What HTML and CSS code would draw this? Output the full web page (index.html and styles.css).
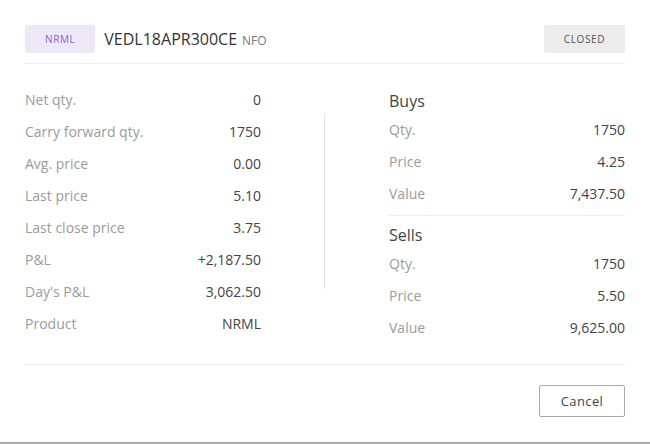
FILE: index.html
```html
<!DOCTYPE html>
<html lang="en">
<head>
  <meta charset="UTF-8">
  <title>Position</title>
  <link rel="stylesheet" href="styles.css">
</head>
<body>

  <div class="modal">
    <div class="modal-header">
      <span class="tag tag-product">NRML</span>
      <span class="symbol">VEDL18APR300CE</span>
      <span class="exchange">NFO</span>
      <span class="tag tag-status">CLOSED</span>
    </div>

    <div class="modal-body">
      <div class="col">
        <div class="row"><span class="label">Net qty.</span><span class="value">0</span></div>
        <div class="row"><span class="label">Carry forward qty.</span><span class="value">1750</span></div>
        <div class="row"><span class="label">Avg. price</span><span class="value">0.00</span></div>
        <div class="row"><span class="label">Last price</span><span class="value">5.10</span></div>
        <div class="row"><span class="label">Last close price</span><span class="value">3.75</span></div>
        <div class="row"><span class="label">P&amp;L</span><span class="value">+2,187.50</span></div>
        <div class="row"><span class="label">Day's P&amp;L</span><span class="value">3,062.50</span></div>
        <div class="row"><span class="label">Product</span><span class="value">NRML</span></div>
      </div>

      <div class="divider"></div>

      <div class="col">
        <div class="side">
          <h4>Buys</h4>
          <div class="row"><span class="label">Qty.</span><span class="value">1750</span></div>
          <div class="row"><span class="label">Price</span><span class="value">4.25</span></div>
          <div class="row"><span class="label">Value</span><span class="value">7,437.50</span></div>
        </div>
        <div class="side">
          <h4>Sells</h4>
          <div class="row"><span class="label">Qty.</span><span class="value">1750</span></div>
          <div class="row"><span class="label">Price</span><span class="value">5.50</span></div>
          <div class="row"><span class="label">Value</span><span class="value">9,625.00</span></div>
        </div>
      </div>
    </div>

    <div class="modal-footer">
      <button class="btn">Cancel</button>
    </div>
  </div>

</body>
</html>
```

FILE: styles.css
```css
body {
  margin: 0;
  padding: 0;
  background: #fff;
  font-family: "Open Sans", "Liberation Sans", sans-serif;
  color: #444;
}

.modal {
  padding: 25px 25px 25px;
  border-bottom: 2px solid #ababab;
}

.modal-header {
  display: flex;
  align-items: center;
  height: 28px;
  padding-bottom: 10px;
  border-bottom: 1px solid #eee;
}

.tag {
  height: 28px;
  line-height: 28px;
  padding: 0 20px;
  border-radius: 2px;
  font-size: 10px;
  letter-spacing: 0.6px;
}

.tag-product {
  background: #ede8f8;
  color: #8a63c9;
}

.tag-status {
  margin-left: auto;
  background: #ececec;
  color: #555;
}

.symbol {
  margin-left: 9px;
  font-size: 16px;
  color: #333;
}

.exchange {
  margin-left: 5px;
  margin-top: 2px;
  font-size: 12px;
  color: #777;
}

.modal-body {
  display: flex;
  margin-top: 20px;
  padding-bottom: 20px;
  border-bottom: 1px solid #eee;
}

.col {
  width: 236px;
}

.divider {
  width: 1px;
  height: 175px;
  margin: 30px 64px 0 63px;
  background: #e4e4e4;
}

.row {
  display: flex;
  justify-content: space-between;
  height: 32px;
  line-height: 32px;
  font-size: 14px;
}

.label {
  color: #9b9b9b;
}

.value {
  color: #444;
}

.side h4 {
  margin: 0;
  padding: 5px 0 1px;
  font-size: 16px;
  font-weight: normal;
  line-height: 24px;
  color: #444;
}

.side + .side {
  margin-top: 5px;
  padding-top: 2px;
  border-top: 1px solid #eee;
}

.modal-footer {
  display: flex;
  justify-content: flex-end;
  margin-top: 20px;
}

.btn {
  width: 86px;
  height: 32px;
  background: #fff;
  border: 1px solid #a8a8a8;
  border-radius: 2px;
  font-family: inherit;
  font-size: 13px;
  color: #444;
  letter-spacing: 0.4px;
}
```
